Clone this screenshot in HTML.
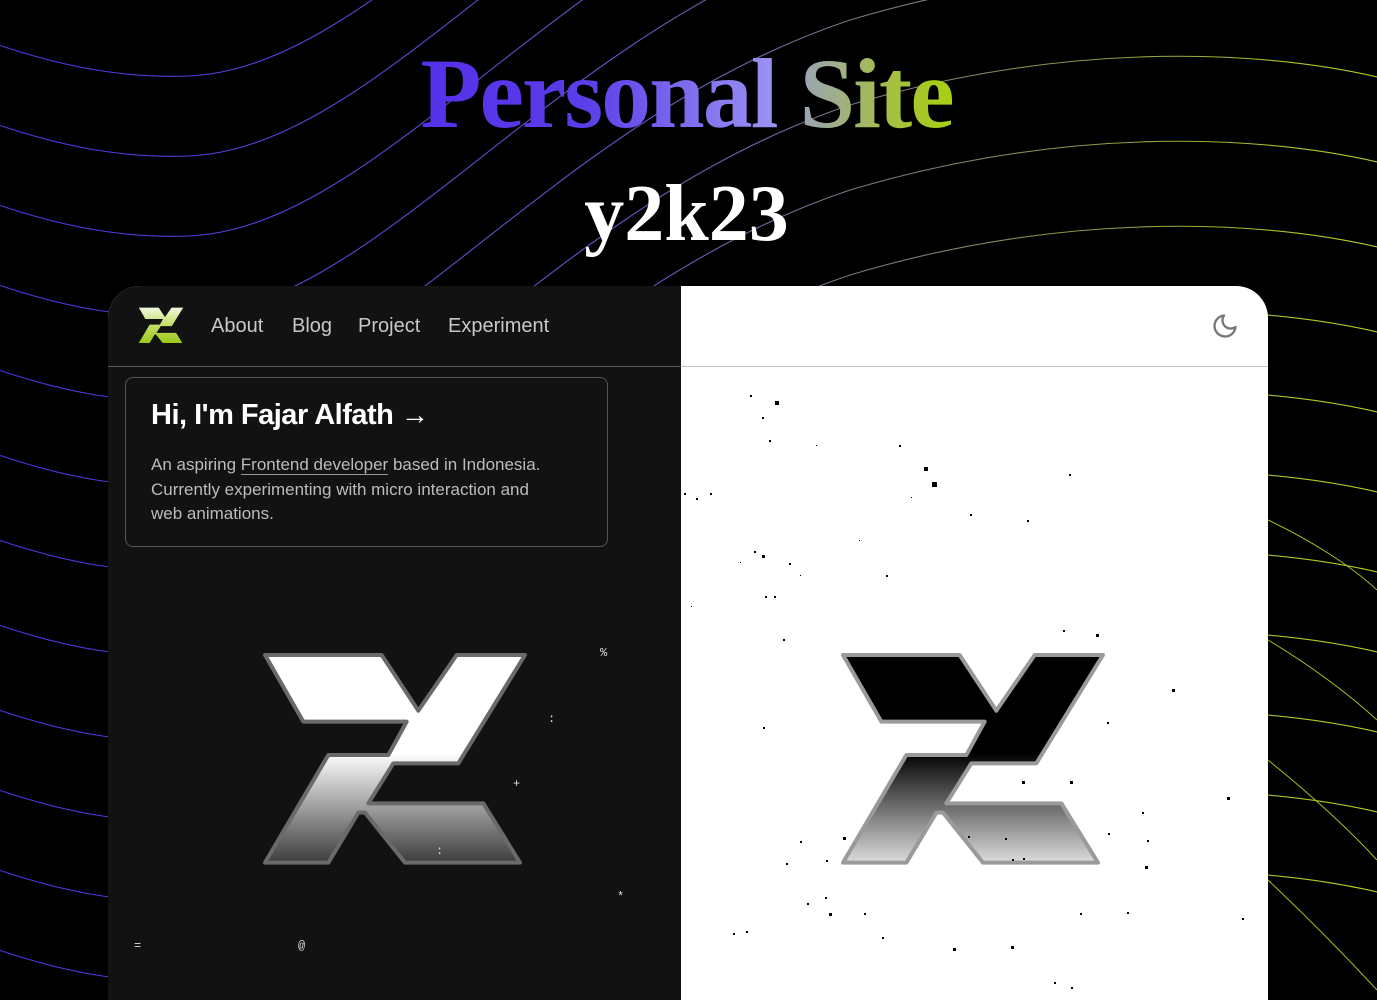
<!DOCTYPE html>
<html><head><meta charset="utf-8">
<style>
*{margin:0;padding:0;box-sizing:border-box}
html,body{width:1377px;height:1000px;overflow:hidden;background:#000;font-family:"Liberation Sans",sans-serif}
#wrap{position:relative;width:1377px;height:1000px;overflow:hidden}
#bg{position:absolute;left:0;top:0}
.title{position:absolute;left:0;width:1377px;text-align:center;font-family:"Liberation Serif",serif;font-weight:bold;white-space:nowrap}
.t1{top:34px;font-size:100px;letter-spacing:-2px;line-height:120px;left:-2px}
.t1 span{-webkit-background-clip:text;background-clip:text;color:transparent}
.p{background:linear-gradient(90deg,#5630ea 0%,#5a3ce8 45%,#9c94f4 100%)}
.s{background:linear-gradient(90deg,#9aa3b8 0%,#a6c040 60%,#a8d010 100%)}
.t2{top:166px;font-size:80px;color:#fff;line-height:96px;left:-2px}
.card{position:absolute;left:108px;top:286px;width:1160px;height:714px;border-radius:32px 32px 0 0;overflow:hidden;background:#fff}
.left{position:absolute;left:0;top:0;width:573px;height:100%;background:#121212}
.hl{position:absolute;left:0;top:80px;width:573px;height:1px;background:#5a5a5a}
.hr{position:absolute;left:573px;top:80px;width:587px;height:1px;background:#c4c4c8}
.nav{position:absolute;top:29px;font-size:20px;color:#c8c8c8}
.box{position:absolute;left:17px;top:91px;width:483px;height:170px;border:1px solid #555;border-radius:8px}
.box h1{position:absolute;left:25px;top:21px;font-size:29px;color:#fff;font-weight:bold;letter-spacing:-0.5px;white-space:nowrap}
.box p{position:absolute;left:25px;top:75px;width:400px;font-size:17px;line-height:24.5px;color:#bcbcbc}
.box u{text-decoration:none;border-bottom:1px solid #999}
.ch{position:absolute;color:#ddd;font-family:"Liberation Mono",monospace;font-size:12px}
.d{position:absolute;background:#000}
</style></head><body><div id="wrap">
<svg id="bg" width="1377" height="1000">
<defs><linearGradient id="lg" gradientUnits="userSpaceOnUse" x1="0" y1="0" x2="1377" y2="0">
<stop offset="0" stop-color="#4c34e0"/><stop offset="0.45" stop-color="#5f56c8"/><stop offset="0.75" stop-color="#8a9050"/><stop offset="1" stop-color="#b8d020"/></linearGradient></defs>
<g fill="none" stroke="url(#lg)" stroke-width="1.1">
<path id="c0" d="M-10,42 C70,70 130,78 190,76 C380,66 550,-205 850,-305 C1050,-365 1250,-365 1390,-330"/>
<use href="#c0" y="80"/><use href="#c0" y="160"/><use href="#c0" y="240"/><use href="#c0" y="325"/><use href="#c0" y="410"/><use href="#c0" y="495"/><use href="#c0" y="580"/><use href="#c0" y="665"/><use href="#c0" y="745"/><use href="#c0" y="825"/><use href="#c0" y="905"/><use href="#c0" y="985"/><use href="#c0" y="1065"/><use href="#c0" y="1145"/><use href="#c0" y="1225"/><use href="#c0" y="-80"/>
</g>
<g fill="none" stroke="#a8c020" stroke-width="1">
<path d="M1268,520 C1310,540 1350,565 1377,590"/>
<path d="M1268,640 C1310,665 1350,695 1377,720"/>
<path d="M1268,760 C1305,790 1345,825 1377,860"/>
<path d="M1268,880 C1305,915 1340,950 1377,990"/>
</g>
</svg>
<div class="title t1"><span class="p">Personal</span> <span class="s">Site</span></div>
<div class="title t2">y2k23</div>
<div class="card">
<div class="left"></div>
<div class="hl"></div><div class="hr"></div>
<svg style="position:absolute;left:28px;top:19px" width="50" height="41" viewBox="0 0 870 720">
<defs><linearGradient id="g0" x1="0" y1="0" x2="0" y2="1"><stop offset="0" stop-color="#f0f8e0"/><stop offset="0.45" stop-color="#c8e070"/><stop offset="1" stop-color="#98c818"/></linearGradient></defs>
<polygon fill="url(#g0)" points="45,45 395,45 505,212 620,45 825,45 625,370 430,370 355,490 700,490 810,668 465,668 345,518 325,518 235,668 45,668 235,345 415,345 470,245 160,245"/></svg>
<div class="nav" style="left:103px">About</div>
<div class="nav" style="left:184px">Blog</div>
<div class="nav" style="left:250px">Project</div>
<div class="nav" style="left:340px">Experiment</div>
<svg style="position:absolute;left:1103px;top:26px" width="28" height="28" viewBox="0 0 24 24" fill="none" stroke="#777" stroke-width="2" stroke-linecap="round" stroke-linejoin="round"><path d="M21 12.79A9 9 0 1 1 11.21 3 7 7 0 0 0 21 12.79z"/></svg>
<div class="box"><h1>Hi, I'm Fajar Alfath <b style="font-size:28px">&#x2192;</b></h1>
<p>An aspiring <u>Frontend developer</u> based in Indonesia. Currently experimenting with micro interaction and web animations.</p></div>
<svg style="position:absolute;left:142px;top:354px" width="290" height="240" viewBox="0 0 870 720">
<defs><linearGradient id="g1" x1="0" y1="0" x2="0" y2="720" gradientUnits="userSpaceOnUse"><stop offset="0.47" stop-color="#fff"/><stop offset="1" stop-color="#1e1e1e"/></linearGradient></defs>
<polygon fill="url(#g1)" stroke="#6a6a6a" stroke-width="12" stroke-linejoin="round" points="45,45 395,45 505,212 620,45 825,45 625,370 430,370 355,490 700,490 810,668 465,668 345,518 325,518 235,668 45,668 235,345 415,345 470,245 160,245"/></svg>
<svg style="position:absolute;left:720px;top:354px" width="290" height="240" viewBox="0 0 870 720">
<defs><linearGradient id="g2" x1="0" y1="0" x2="0" y2="720" gradientUnits="userSpaceOnUse"><stop offset="0.47" stop-color="#000"/><stop offset="1" stop-color="#fff"/></linearGradient></defs>
<polygon fill="url(#g2)" stroke="#9a9a9a" stroke-width="12" stroke-linejoin="round" points="45,45 395,45 505,212 620,45 825,45 625,370 430,370 355,490 700,490 810,668 465,668 345,518 325,518 235,668 45,668 235,345 415,345 470,245 160,245"/></svg>
<div class="ch" style="left:492px;top:360px">%</div>
<div class="ch" style="left:440px;top:426px">:</div>
<div class="ch" style="left:405px;top:491px">+</div>
<div class="ch" style="left:328px;top:558px">:</div>
<div class="ch" style="left:509px;top:604px">*</div>
<div class="ch" style="left:26px;top:653px">=</div>
<div class="ch" style="left:190px;top:653px">@</div>
</div>
<div id="dots"></div>
</div>
<script>
var d=[[775,401,4],[750,395,2],[762,417,2],[769,440,2],[816,445,1],[899,445,2],[924,467,4],[932,482,5],[1069,474,2],[684,493,2],[696,498,2],[710,493,2],[911,497,1],[970,514,2],[1027,520,2],[859,540,1],[754,551,2],[762,555,3],[740,562,1],[789,563,2],[800,575,1],[886,575,2],[765,596,2],[691,606,1],[774,596,2],[783,639,2],[1063,630,2],[1096,634,3],[1172,689,3],[1107,722,2],[763,727,2],[1227,797,3],[1142,812,2],[1147,840,2],[1145,866,3],[1108,833,2],[800,841,2],[843,837,3],[826,860,2],[786,863,2],[825,897,2],[829,913,3],[807,903,2],[864,913,2],[1080,913,2],[1127,912,2],[1242,918,2],[882,937,2],[746,931,2],[733,933,2],[1011,946,3],[953,948,3],[1071,987,2],[1054,982,2],[1022,781,3],[1070,781,3],[1005,838,2],[968,836,2],[1023,858,2],[1012,859,2]];
var h='';d.forEach(function(p){h+='<div class="d" style="left:'+p[0]+'px;top:'+p[1]+'px;width:'+p[2]+'px;height:'+p[2]+'px"></div>'});
document.getElementById('dots').innerHTML=h;
</script>
</body></html>
